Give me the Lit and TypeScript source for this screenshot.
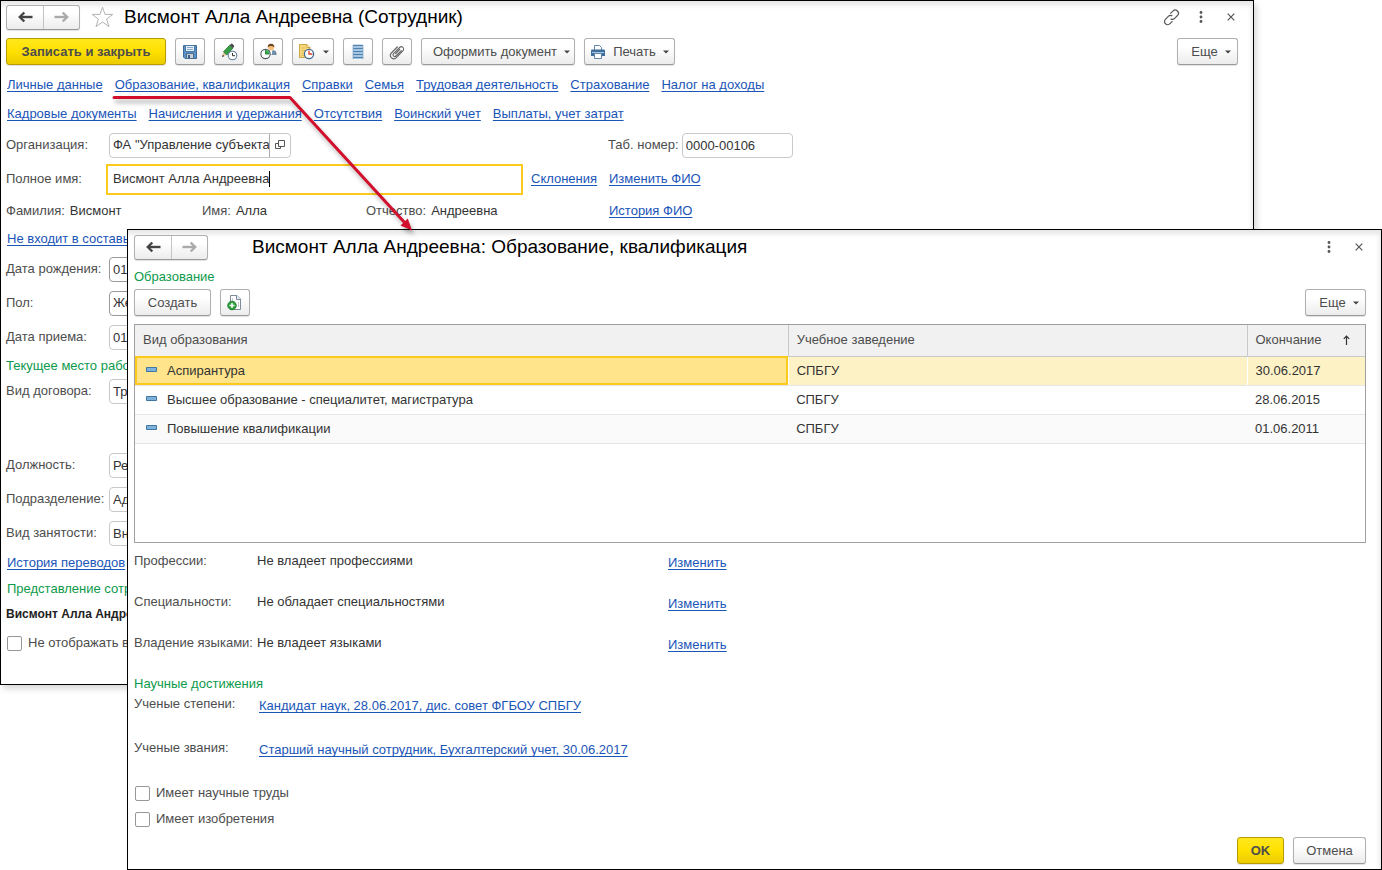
import { LitElement, html, css, svg } from "lit";
import { customElement } from "lit/decorators.js";

const base = css`
  :host { display: block; box-sizing: border-box; min-width: 0; font: 13px/16px "Liberation Sans", Arial, sans-serif; color: #4d4d4d; }
  *, *::before, *::after { box-sizing: border-box; }
  button, input, select { font: inherit; color: inherit; margin: 0; }
  svg { display: block; flex: none; }
  a { color: #1a55b8; text-decoration: underline; text-underline-offset: 2px; text-decoration-skip-ink: none; white-space: nowrap; }
  h1 { margin: 0; font-size: 19px; line-height: 24px; font-weight: 400; color: #000; white-space: nowrap; }
  h2 { margin: 0; font-size: 13px; line-height: 16px; font-weight: 400; color: #0d9a4b; white-space: nowrap; }
  .window { height: 100%; background: #fff; border: 1px solid #000; box-shadow: inset 0 7px 5px -3px #e6e6e6, inset -5px 0 5px -4px #e6e6e6, 3px 4px 6px #00000026; }
  .row { display: flex; align-items: center; }
  .grow { flex: 1; }
  .btn { display: inline-flex; align-items: center; justify-content: center; gap: 7px; height: 27px; padding: 0 13px; border: 1px solid #b0b0b0; border-bottom-color: #999; border-radius: 3px; background: linear-gradient(#fff 30%, #ececec); box-shadow: 0 1px 1px #0000001f; white-space: nowrap; flex: none; }
  .icon { width: 30px; padding: 0; }
  .primary { background: linear-gradient(#ffe81c, #ffe000 50%, #eccb00); border-color: #b79b00; font-weight: 700; }
  .nav { display: flex; height: 25px; border: 1px solid #b0b0b0; border-bottom-color: #999; border-radius: 3px; background: linear-gradient(#fff 30%, #ececec); box-shadow: 0 1px 1px #0000001f; flex: none; }
  .nav button { width: 36px; padding: 0; border: 0; background: none; display: grid; place-items: center; }
  .nav button + button { border-left: 1px solid #c4c4c4; }
  .plain { width: 30px; height: 24px; padding: 0; border: 0; background: none; display: grid; place-items: center; flex: none; }
  .plain:last-child { margin-right: -8px; }
  .check { display: flex; align-items: center; gap: 6px; white-space: nowrap; }
  .check input { appearance: none; width: 15px; height: 15px; border: 1px solid #979797; border-radius: 2px; background: #fff; flex: none; }
`;

const arrow = (left: boolean) => html`<svg width="15" height="12" viewBox="0 0 15 12" fill="none" stroke=${left ? "#444" : "#aaa"} stroke-width="2.4">
  ${left ? svg`<path d="M2 6h12.5"/><path d="M6.3 1.5 1.8 6l4.5 4.5"/>` : svg`<path d="M.5 6H13"/><path d="M8.7 1.5 13.2 6l-4.5 4.5"/>`}</svg>`;
const nav = html`<div class="nav"><button aria-label="Назад">${arrow(true)}</button><button aria-label="Вперед">${arrow(false)}</button></div>`;
const caret = html`<svg width="6" height="4" viewBox="0 0 6 4"><path d="M0 .5h6L3 3.5z" fill="#444"/></svg>`;
const dots = html`<button class="plain" aria-label="Меню"><svg width="4" height="12" viewBox="0 0 4 12" fill="#555"><circle cx="2" cy="1.5" r="1.4"/><circle cx="2" cy="6" r="1.4"/><circle cx="2" cy="10.5" r="1.4"/></svg></button>`;
const close = html`<button class="plain" aria-label="Закрыть"><svg width="8" height="8" viewBox="0 0 8 8"><path d="M.7.7l6.6 6.6M7.3.7.7 7.3" stroke="#555" stroke-width="1.2"/></svg></button>`;

const star = html`<svg width="23" height="22" viewBox="0 0 23 22"><path d="M11.5 1.2 14 8.4h7.8l-6.2 4.7 2.4 7.5-6.5-4.6L5 20.6l2.4-7.5L1.200 8.400H9z" fill="#fff" stroke="#b3b3b3"/></svg>`;
const chain = html`<svg width="17" height="17" viewBox="0 0 17 17" fill="none" stroke="#555" stroke-width="1.2"><path d="M7.300 4.700 9.900 2.100a3.100 3.100 0 0 1 4.600 4.400l-2.900 2.900a3.100 3.100 0 0 1-4 .3"/><path d="M9.500 12.200 7 14.700a3.100 3.100 0 0 1-4.600-4.400l2.900-2.900a3.100 3.100 0 0 1 4.100-.3"/></svg>`;
const save = html`<svg width="16" height="16" viewBox="0 0 16 16"><path d="M1.500 1.500h13v13h-11.500l-1.500-1.500z" fill="#5b90c4" stroke="#3f6a97"/><path d="M3.500 1.500h9v6h-9z" fill="#e7eff7" stroke="#4a78a5"/><path d="M5 3.500h6M5 5.500h6" stroke="#86a9cc"/><path d="M4.500 9.500h7v5h-7z" fill="#c9ced3" stroke="#4a6d8f"/><path d="M6 11h2v3H6z" fill="#35608b"/></svg>`;
const pencil = html`<svg width="18" height="18" viewBox="0 0 18 18"><path d="M2 13.500 3.500 9l3 3z" fill="#e9c79c"/><path d="M2 14l.8-2.300 1.500 1.500z" fill="#333"/><path d="M3.500 8.800 9.700 2.200l3.200 3-6.200 6.700z" fill="#37a046" stroke="#22722f" stroke-width=".8"/><path d="M9.700 2.200 11 .9q.8-.6 1.500 0l1.500 1.500q.6.700 0 1.400l-1.100 1.400z" fill="#4c4c4c"/><circle cx="12.500" cy="12.500" r="4.300" fill="#fff" stroke="#5d7f9f" stroke-width="1.100"/><path d="M12.500 10v2.700h2.500" fill="none" stroke="#333"/></svg>`;
const personClock = html`<svg width="17" height="17" viewBox="0 0 17 17"><path d="M5.500 11.500q0-3.800 3.500-4l2 1.800 2-1.800q3.300.2 3.300 4z" fill="#6f90ad" stroke="#506f8b" stroke-width=".6"/><path d="M10 7.500h2.200l-.2 4h-1.600z" fill="#fff"/><circle cx="11" cy="4.200" r="3.100" fill="#f2c078"/><path d="M7.700 4.200Q7.600.700 11 .700t3.400 3.500Q12.700 3 11 3T7.700 4.200" fill="#6b4423"/><circle cx="5.500" cy="11" r="4.600" fill="#fff" stroke="#4f5b60" stroke-width="1.100"/><path d="M5.500 7v4h4a4 4 0 0 0-4-4z" fill="#35ad4c"/><path d="M5.500 7.300V11H9" fill="none" stroke="#28833a"/></svg>`;
const noteClock = html`<svg width="17" height="17" viewBox="0 0 17 17"><path d="M1.500 1.500H9l3 3v10H1.500z" fill="#f8d87c" stroke="#cca547"/><path d="M9 1.500v3h3" fill="#fff5cd" stroke="#cca547"/><path d="M3.500 5h4M3.500 7.500h4M3.500 10h2M3.500 12.500h2" stroke="#dfb65b"/><circle cx="11" cy="11" r="4.600" fill="#fff" stroke="#3d6b98" stroke-width="1.300"/><path d="M11 7.500V11h3.400" fill="none" stroke="#df3f2f" stroke-width="1.300"/></svg>`;
const list = html`<svg width="12" height="16" viewBox="0 0 12 16"><path d="M1 1h10v14H1z" fill="#c4dcf0"/><path d="M1 1.500h10M1 4.500h10M1 7.500h10M1 10.500h10M1 13.500h10" stroke="#4e81ae" stroke-width="1.500"/><path d="M1 1v14M11 1v14" stroke="#7ea5c8" stroke-width=".7"/></svg>`;
const clip = html`<svg width="16" height="16" viewBox="0 0 16 16" fill="none" stroke="#666" stroke-width="1.100"><path d="M12.600 6.300 7 12a1.600 1.600 0 0 1-2.400-2.300l6-6.200a2.300 2.300 0 0 1 3.400 3.200l-6.600 7a3.400 3.400 0 0 1-5-4.700l6.300-6.500"/><path d="m11 5-4.700 5"/></svg>`;
const printer = html`<svg width="16" height="16" viewBox="0 0 16 16"><path d="M4.500 6V1.500h5l2 2V6" fill="#fff" stroke="#5f86aa"/><path d="M1 6.500q0-1 1-1h12q1 0 1 1V12H1z" fill="#3d6e9c"/><path d="M2 8.500h12" stroke="#a9c7e2"/><path d="M4.500 9.500h7v5h-7z" fill="#fff" stroke="#5f86aa"/></svg>`;
const addDoc = html`<svg width="16" height="17" viewBox="0 0 16 17"><path d="M3.500 1.500H10l3.500 3.500v10.500h-10z" fill="#fff" stroke="#7d8c9a"/><path d="M9.500 1.500V5.500h4" fill="#e8edf1" stroke="#7d8c9a"/><path d="M5.500 4v3M11.500 8v5" stroke="#c4ccd3"/><circle cx="5" cy="11.500" r="4.300" fill="#2ca13a" stroke="#19772a" stroke-width=".8"/><path d="M5 9v5M2.500 11.500h5" stroke="#fff" stroke-width="1.500"/></svg>`;
const openIcon = html`<svg width="10" height="10" viewBox="0 0 10 10" fill="#fff" stroke="#555"><path d="M.5 3.500h5v5h-5z"/><path d="M3.500.5h6v6h-6z"/></svg>`;

@customElement("employee-window")
class EmployeeWindow extends LitElement {
  static styles = [base, css`
    .window { padding: 0 15px 24px 5px; }
    .head { height: 32px; }
    .star { width: 23px; margin: 0 10px 0 11px; }
    .tools { height: 37px; gap: 9px; }
    .wide { width: 160px; }
    .drop { width: 42px; gap: 8px; padding: 0; }
    .doc { width: 154px; padding: 0 0 0 7px; }
    .print { width: 91px; padding: 0; }
    .more { width: 61px; padding: 0 0 0 7px; }
    .links { gap: 12px; height: 29px; padding-left: 1px; }
    .form { display: grid; grid-template-columns: 602px 1fr; }
    .r34 { height: 34px; }
    .r30 { height: 30px; }
    .r26 { height: 26px; padding-left: 1px; }
    .r24 { height: 24px; }
    label { white-space: nowrap; }
    .key { width: 103px; flex: none; }
    .box { width: 182px; height: 25px; border: 1px solid #c9c9c9; border-radius: 4px; background: #fff; padding: 0 3px; color: #333; appearance: none; outline: none; }
    .strong { border-color: #999; }
    .num { width: 111px; margin-left: 3px; }
    .combo { display: flex; padding: 0 0 0 3px; }
    .combo input { flex: 1; min-width: 0; border: 0; padding: 0; background: none; outline: none; }
    .combo button { width: 21px; border: 0; border-left: 1px solid #aaa; background: none; padding: 0; display: grid; place-items: center; }
    .active { display: flex; align-items: center; flex: 1; height: 31px; margin: 0 8px 0 -3px; padding-left: 5px; border: 2px solid #fcca1b; color: #333; }
    .active input { field-sizing: content; border: 0; padding: 0; background: none; outline: none; }
    .cursor { width: 1px; height: 16px; background: #000; }
    .decl { width: 77px; }
    .names { display: grid; grid-template-columns: 196px 164px 1fr; }
    .names b { font-weight: 400; color: #333; margin-left: 5px; }
    .right { padding-left: 1px; }
    .contract { margin-bottom: 44px; height: 26px; }
    .bold { font-size: 12px; font-weight: 700; color: #222; }
    .check { height: 34px; padding-left: 1px; }
  `];
  field(id: string, label: string, value: string, cls = "") {
    return html`<div class="row r34"><label class="key" for=${id}>${label}</label><input class="box ${cls}" id=${id} .value=${value}></div>`;
  }
  render() {
    const first = ["Личные данные", "Образование, квалификация", "Справки", "Семья", "Трудовая деятельность", "Страхование", "Налог на доходы"];
    const second = ["Кадровые документы", "Начисления и удержания", "Отсутствия", "Воинский учет", "Выплаты, учет затрат"];
    return html`<section class="window">
      <header class="row head">${nav}<span class="star">${star}</span><h1>Висмонт Алла Андреевна (Сотрудник)</h1><span class="grow"></span>
        <button class="plain" aria-label="Ссылка">${chain}</button>${dots}${close}</header>
      <div class="row tools">
        <button class="btn primary wide">Записать и закрыть</button>
        <button class="btn icon" aria-label="Записать">${save}</button>
        <button class="btn icon" aria-label="Изменить">${pencil}</button>
        <button class="btn icon" aria-label="Сотрудник">${personClock}</button>
        <button class="btn drop" aria-label="События">${noteClock}${caret}</button>
        <button class="btn icon" aria-label="Список">${list}</button>
        <button class="btn icon" aria-label="Файлы">${clip}</button>
        <button class="btn doc">Оформить документ ${caret}</button>
        <button class="btn print">${printer}Печать ${caret}</button>
        <span class="grow"></span>
        <button class="btn more">Еще ${caret}</button>
      </div>
      <nav class="row links">${first.map((t) => html`<a href="#">${t}</a>`)}</nav>
      <nav class="row links">${second.map((t) => html`<a href="#">${t}</a>`)}</nav>
      <div class="form">
        <div class="row r34"><label class="key" for="org">Организация:</label><div class="box combo"><input id="org" .value=${'ФА "Управление субъектами"'}><button aria-label="Открыть">${openIcon}</button></div></div>
        <div class="row r34"><label for="num">Таб. номер:</label><input class="box num" id="num" .value=${"0000-00106"}></div>
        <div class="row r34"><label class="key" for="full">Полное имя:</label><div class="active"><input id="full" .value=${"Висмонт Алла Андреевна"}><span class="cursor"></span></div><a class="decl" href="#">Склонения</a></div>
        <div class="row r34 right"><a href="#">Изменить ФИО</a></div>
        <div class="names r30"><span class="row">Фамилия: <b>Висмонт</b></span><span class="row">Имя: <b>Алла</b></span><span class="row">Отчество: <b>Андреевна</b></span></div>
        <div class="row r30 right"><a href="#">История ФИО</a></div>
      </div>
      <div class="row r26"><a href="#">Не входит в составы</a></div>
      ${this.field("birth", "Дата рождения:", "01.01.1980", "strong")}
      <div class="row r34"><label class="key" for="sex">Пол:</label><select class="box strong" id="sex"><option>Женский</option></select></div>
      ${this.field("hired", "Дата приема:", "01.01.2015")}
      <div class="row r24"><h2>Текущее место работы</h2></div>
      <div class="row contract"><label class="key" for="contract">Вид договора:</label><input class="box" id="contract" .value=${"Трудовой договор"}></div>
      ${this.field("post", "Должность:", "Редактор")}
      ${this.field("dept", "Подразделение:", "Администрация")}
      ${this.field("busy", "Вид занятости:", "Внутреннее")}
      <div class="row r26"><a href="#">История переводов</a></div>
      <div class="row r26 rep"><h2>Представление сотр.</h2></div>
      <div class="row r24 bold">Висмонт Алла Андреевна</div>
      <label class="check"><input type="checkbox">Не отображать в</label>
    </section>`;
  }
}

@customElement("education-window")
class EducationWindow extends LitElement {
  static styles = [base, css`
    .window { display: flex; flex-direction: column; padding: 0 15px 5px 6px; }
    .head { height: 34px; }
    .head h1 { margin-left: 44px; }
    .sub { padding: 5px 0 4px; }
    .tools { gap: 9px; margin-bottom: 8px; }
    .more { width: 61px; padding: 0 0 0 7px; }
    .create { width: 77px; padding: 0; }
    .grid { min-height: 219px; border: 1px solid #a0a0a0; }
    table { width: 100%; border-collapse: collapse; table-layout: fixed; }
    .kind { width: 53.1%; }
    .end { width: 118px; }
    th { height: 31px; padding: 0 8px; background: #f1f1f1; border-bottom: 1px solid #c9c9c9; text-align: left; font-weight: 400; }
    th + th { border-left: 1px solid #c9c9c9; }
    td { height: 29px; padding: 0 8px; border-bottom: 1px solid #e6e6e6; color: #333; white-space: nowrap; }
    tr.even td { background: #fafafa; }
    tr.sel td { background: #fdf1c6; border-left: 1px solid #fff; }
    tr.sel td:first-child { background: #ffe48c; outline: 2px solid #fcca1b; outline-offset: -2px; border-left: 0; }
    .cell { display: flex; align-items: center; gap: 10px; padding-left: 3px; }
    .sort { display: flex; justify-content: space-between; align-items: center; padding-right: 7px; }
    dl { margin: 0; display: grid; grid-template-columns: 123px 411px 1fr; }
    dl > * { margin: 0; height: 41px; padding-top: 10px; white-space: nowrap; }
    dd { color: #333; }
    dl > .act { padding-top: 12px; }
    .science { padding: 10px 0 0; }
    .degrees { grid-template-columns: 125px 1fr; }
    .degrees > * { height: 44px; padding-top: 4px; }
    .degrees > .act { padding-top: 6px; }
    .check { height: 26px; padding-left: 1px; }
    .foot { gap: 9px; justify-content: flex-end; margin-top: auto; }
    .ok { width: 47px; padding: 0; }
    .cancel { width: 73px; padding: 0; }
  `];
  render() {
    const rows = [["Аспирантура", "30.06.2017"], ["Высшее образование - специалитет, магистратура", "28.06.2015"], ["Повышение квалификации", "01.06.2011"]];
    const facts = [["Профессии:", "Не владеет профессиями"], ["Специальности:", "Не обладает специальностями"], ["Владение языками:", "Не владеет языками"]];
    return html`<section class="window">
      <header class="row head">${nav}<h1>Висмонт Алла Андреевна: Образование, квалификация</h1><span class="grow"></span>${dots}${close}</header>
      <h2 class="sub">Образование</h2>
      <div class="row tools"><button class="btn create">Создать</button><button class="btn icon" aria-label="Добавить">${addDoc}</button><span class="grow"></span><button class="btn more">Еще ${caret}</button></div>
      <div class="grid"><table>
        <colgroup><col class="kind"><col><col class="end"></colgroup>
        <thead><tr><th>Вид образования</th><th>Учебное заведение</th><th><span class="sort">Окончание <svg width="7" height="10" viewBox="0 0 7 10" fill="none" stroke="#333" stroke-width="1.200"><path d="M3.500 10V1M.8 3.800 3.500 1l2.700 2.800"/></svg></span></th></tr></thead>
        <tbody>${rows.map((r, i) => html`<tr class=${["sel", "", "even"][i]}><td><span class="cell"><svg width="11" height="8" viewBox="0 0 11 8"><path d="M.5.5h10v4H.5z" fill="#7db2dc" stroke="#41749f"/></svg>${r[0]}</span></td><td>СПБГУ</td><td>${r[1]}</td></tr>`)}</tbody>
      </table></div>
      <dl>${facts.map((f) => html`<dt>${f[0]}</dt><dd>${f[1]}</dd><dd class="act"><a href="#">Изменить</a></dd>`)}</dl>
      <h2 class="science">Научные достижения</h2>
      <dl class="degrees">
        <dt>Ученые степени:</dt><dd class="act"><a href="#">Кандидат наук, 28.06.2017, дис. совет ФГБОУ СПБГУ</a></dd>
        <dt>Ученые звания:</dt><dd class="act"><a href="#">Старший научный сотрудник, Бухгалтерский учет, 30.06.2017</a></dd>
      </dl>
      <label class="check"><input type="checkbox">Имеет научные труды</label>
      <label class="check"><input type="checkbox">Имеет изобретения</label>
      <footer class="row foot"><button class="btn primary ok">OK</button><button class="btn cancel">Отмена</button></footer>
    </section>`;
  }
}

@customElement("app-root")
class AppRoot extends LitElement {
  static styles = css`
    :host { display: grid; position: relative; min-height: 100vh; background: #fff; overflow: hidden; }
    employee-window, education-window { grid-area: 1 / 1; }
    employee-window { align-self: start; margin-right: 128px; }
    education-window { margin: 229px 0 0 127px; }
    .pointer { position: absolute; left: 0; top: 0; pointer-events: none; filter: drop-shadow(2px 4px 2px #0000004d); }
  `;
  render() {
    return html`<employee-window></employee-window><education-window></education-window>
      <svg class="pointer" width="430" height="240" viewBox="0 0 430 240"><path d="M114 97.500H290L405 223" fill="none" stroke="#d20f2c" stroke-width="3" stroke-linecap="round" stroke-linejoin="round"/><path d="M412 230.500 400.500 225.500 407.800 218.500z" fill="#d20f2c"/></svg>`;
  }
}
